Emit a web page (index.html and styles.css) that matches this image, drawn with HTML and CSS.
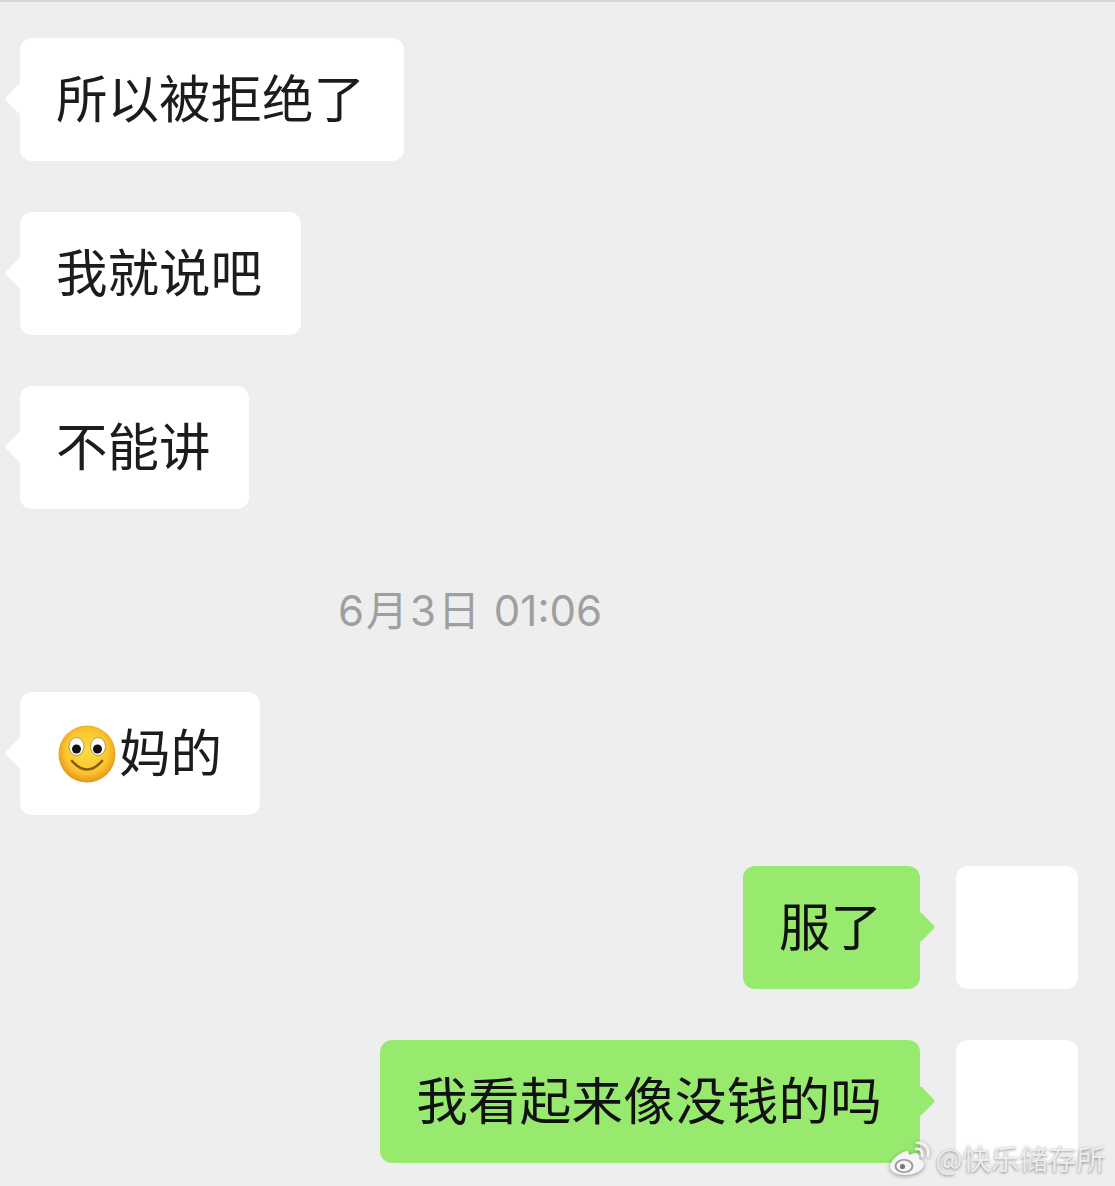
FILE: index.html
```html
<!DOCTYPE html>
<html lang="zh-CN">
<head>
    <meta charset="UTF-8">
    <meta name="viewport" content="width=device-width, initial-scale=1.0">
    <title>聊天记录</title>
    <link rel="stylesheet" href="styles.css">
</head>
<body>
    <div class="chat">
        <div class="row">
            <div class="bubble left">所以被拒绝了</div>
        </div>
        <div class="row">
            <div class="bubble left">我就说吧</div>
        </div>
        <div class="row">
            <div class="bubble left tight">不能讲</div>
        </div>

        <div class="time"><span class="date">6月3日</span> 01:06</div>

        <div class="row">
            <div class="bubble left tight">
                <svg class="emoji" viewBox="0 0 60 60">
                    <defs>
                        <radialGradient id="face" cx="50%" cy="45%" r="55%">
                            <stop offset="0" stop-color="#ffdc3e"/>
                            <stop offset="0.7" stop-color="#fbc42e"/>
                            <stop offset="1" stop-color="#e3951c"/>
                        </radialGradient>
                    </defs>
                    <circle cx="30" cy="30" r="28.5" fill="url(#face)"/>
                    <ellipse cx="19.5" cy="22.5" rx="7.5" ry="9" fill="#fff" stroke="#a89a6a" stroke-width="1"/>
                    <ellipse cx="41" cy="22.5" rx="7.5" ry="9" fill="#fff" stroke="#a89a6a" stroke-width="1"/>
                    <circle cx="19.5" cy="25" r="4.5" fill="#111"/>
                    <circle cx="40.5" cy="25" r="4.5" fill="#111"/>
                    <path d="M15 37 Q30 54 45 37" fill="none" stroke="#8a5a10" stroke-width="2.6" stroke-linecap="round"/>
                </svg>妈的
            </div>
        </div>

        <div class="row right">
            <div class="bubble green">服了</div>
            <div class="avatar"></div>
        </div>
        <div class="row right">
            <div class="bubble green long">我看起来像没钱的吗</div>
            <div class="avatar"></div>
        </div>
    </div>

    <div class="watermark">
        <svg class="weibo" viewBox="0 0 42 36">
            <path d="M17 11C8 14 1 21 1 27c0 5 7 8 15 8 10 0 19-5 19-11 0-3-3-4-5-5 1-3 0-6-4-6-2 0-4 1-6 2 0-3-1-5-3-4z" fill="#f6f6f6"/>
            <ellipse cx="15" cy="26" rx="9.5" ry="7" fill="#9a9a9a"/>
            <ellipse cx="15" cy="26" rx="7.5" ry="5.4" fill="#f6f6f6"/>
            <circle cx="13.5" cy="26.5" r="2.6" fill="#777"/>
            <path d="M27 9c4-1 7 2 6 7" fill="none" stroke="#f6f6f6" stroke-width="2.4" stroke-linecap="round"/>
            <path d="M28 3c7-1 13 5 11 13" fill="none" stroke="#f6f6f6" stroke-width="2.6" stroke-linecap="round"/>
        </svg>
        <span>@快乐储存所</span>
    </div>
</body>
</html>
```

FILE: styles.css
```css
body {
    margin: 0;
    height: 1186px;
    overflow: hidden;
    background-color: #eeeeee;
    border-top: 2px solid #d6d6d6;
    box-sizing: border-box;
    font-family: "Noto Sans CJK SC", "Liberation Sans", sans-serif;
    position: relative;
}
.chat {
    display: flex;
    flex-direction: column;
    gap: 51px;
    padding: 36px 37px 0 20px;
}
.row {
    display: flex;
    align-items: flex-start;
}
.row.right {
    justify-content: flex-end;
    gap: 36px;
}
.bubble {
    position: relative;
    display: flex;
    align-items: center;
    box-sizing: border-box;
    height: 123px;
    padding: 0 39px 8px 36px;
    border-radius: 12px;
    font-size: 51.5px;
    line-height: 1;
    color: #1c1c1c;
    white-space: nowrap;
}
.bubble.left {
    background-color: #fff;
}
.bubble.tight {
    padding-right: 38px;
}
.bubble.green {
    background-color: #98ea6f;
    color: #111;
    padding-right: 38px;
}
.bubble.long {
    letter-spacing: 0.25px;
}
.bubble::before {
    content: "";
    position: absolute;
    top: 50%;
    width: 22px;
    height: 22px;
    margin-top: -12px;
    border-radius: 3px;
    background-color: inherit;
    transform: rotate(45deg);
}
.bubble.left::before {
    left: -11px;
}
.bubble.green::before {
    right: -11px;
}
.emoji {
    width: 60px;
    height: 60px;
    margin: 8px 2px 0 1px;
    flex: none;
}
.avatar {
    width: 122px;
    height: 123px;
    border-radius: 12px;
    background-color: #fff;
}
.time {
    margin: 21px 0 0 318px;
    height: 60px;
    font-size: 42px;
    line-height: 60px;
    color: #9f9f9f;
    font-family: "Inter", "Noto Sans CJK SC", sans-serif;
}
.date {
    letter-spacing: 2px;
}
.watermark {
    position: absolute;
    right: 10px;
    bottom: 10px;
    display: flex;
    align-items: center;
    gap: 5px;
    font-size: 28.5px;
    line-height: 36px;
    color: #ececec;
    text-shadow: 0 1px 3px rgba(0, 0, 0, 0.45);
}
.weibo {
    width: 42px;
    height: 36px;
    filter: drop-shadow(0 1px 2px rgba(0, 0, 0, 0.4));
}
```
